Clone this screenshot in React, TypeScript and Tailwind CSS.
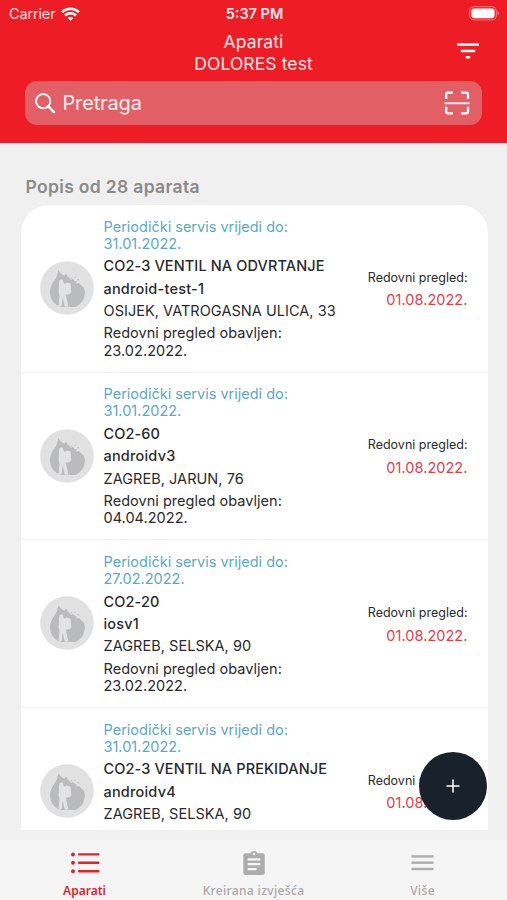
import { useState } from 'react';

interface Device {
  serviceUntil: string;
  model: string;
  name: string;
  address: string;
  checkedAt?: string;
  nextCheck: string;
}

const devices: Device[] = [
  {
    serviceUntil: '31.01.2022.',
    model: 'CO2-3 VENTIL NA ODVRTANJE',
    name: 'android-test-1',
    address: 'OSIJEK, VATROGASNA ULICA, 33',
    checkedAt: '23.02.2022.',
    nextCheck: '01.08.2022.',
  },
  {
    serviceUntil: '31.01.2022.',
    model: 'CO2-60',
    name: 'androidv3',
    address: 'ZAGREB, JARUN, 76',
    checkedAt: '04.04.2022.',
    nextCheck: '01.08.2022.',
  },
  {
    serviceUntil: '27.02.2022.',
    model: 'CO2-20',
    name: 'iosv1',
    address: 'ZAGREB, SELSKA, 90',
    checkedAt: '23.02.2022.',
    nextCheck: '01.08.2022.',
  },
  {
    serviceUntil: '31.01.2022.',
    model: 'CO2-3 VENTIL NA PREKIDANJE',
    name: 'androidv4',
    address: 'ZAGREB, SELSKA, 90',
    nextCheck: '01.08.2022.',
  },
];

function WifiIcon() {
  return (
    <svg width="19" height="14" viewBox="0 0 19 14" fill="none" stroke="#fff" strokeWidth="2.5">
      <path d="M1 5.2C5.8.7 13.2.7 18 5.2" />
      <path d="M4 8.5c3.2-2.9 7.8-2.9 11 0" />
      <path d="M9.5 13.8 6.5 11c1.700-1.500 4.300-1.500 6 0z" fill="#fff" stroke="none" />
    </svg>
  );
}

function BatteryIcon() {
  return (
    <svg width="31" height="15" viewBox="0 0 31 15">
      <rect x="0.7" y="0.7" width="26.6" height="13.2" rx="4" fill="none" stroke="#fff" strokeOpacity="0.4" />
      <rect x="2.4" y="2.4" width="23.2" height="9.8" rx="2.4" fill="#fff" />
      <path d="M28.6 5v4.6c1.6-.7 1.6-3.9 0-4.6z" fill="#fff" fillOpacity="0.5" />
    </svg>
  );
}

function FilterIcon() {
  return (
    <svg width="22" height="16" viewBox="0 0 22 16" fill="#fff">
      <rect x="0" y="0.3" width="22" height="2.5" rx="0.5" />
      <rect x="3.8" y="6.7" width="14.6" height="2.5" rx="1" />
      <rect x="8.7" y="13" width="4.6" height="2.5" rx="1" />
    </svg>
  );
}

function SearchIcon() {
  return (
    <svg width="22" height="22" viewBox="0 0 22 22" fill="none" stroke="#fff">
      <circle cx="8.2" cy="9.2" r="7.1" strokeWidth="1.9" />
      <path d="m13.5 14.7 5.500 5.500" strokeWidth="2.500" strokeLinecap="round" />
    </svg>
  );
}

function ScanIcon() {
  return (
    <svg width="26" height="24" viewBox="0 0 26 24" fill="none" stroke="#fff" strokeWidth="2.3">
      <path d="M2.2 8V3.2q0-1.500 1.500-1.500H9M17 1.700h5.500q1.500 0 1.500 1.500V8M24 15.800v5q0 1.500-1.500 1.500H17M9 22.300H3.700q-1.500 0-1.500-1.500v-5" />
      <path d="M0.5 12.300h25" strokeWidth="1.900" />
    </svg>
  );
}

function DeviceAvatar() {
  return (
    <svg width="54" height="54" viewBox="0 0 54 54" className="shrink-0">
      <circle cx="27" cy="27" r="26.8" fill="#e1e1e1" />
      <path
        d="M18.3 9C19.500 12 22 13.700 24.500 14.800L26 12.500 28 15.500 31 19 33 18 35 20.500 37 19.700 36 22.500 39 22 41.500 24.500 44 26.800C46.200 33 44 39.500 39.500 43.500L35.500 46H21C15 44.200 10.500 39 10 32.500 9.600 25.500 13.200 21.500 15.700 17.500 17.400 14.600 17.900 12 18.300 9Z"
        fill="#b9bbbc"
      />
      <path d="M31 16.500h1.200v1.200H31zM34.500 15.800h1v1h-1zM37.500 18h1.200v1.200h-1.200z" fill="#b9bbbc" />
      {/* Firefighter with a backpack */}
      <path
        d="M19.300 19.800C19.800 18 22.800 18 23.300 19.800L23.500 22 25 23 26 21.500 30.500 22.300 31.300 30.500 30.300 33 25.800 33.800 28.300 45.500H24.700L22.700 36.500 21.500 45.500H18.500L19.500 34.500 18.500 31 19 22.500Z"
        fill="#e3e3e3"
      />
    </svg>
  );
}

function ListIcon() {
  return (
    <svg width="30" height="22" viewBox="0 0 30 22" fill="#e3202b">
      <circle cx="3" cy="2.400" r="2" />
      <circle cx="3" cy="10.800" r="2" />
      <circle cx="3" cy="19.200" r="2" />
      <rect x="8" y="1.200" width="21.500" height="2.400" rx="1" />
      <rect x="8" y="9.600" width="21.500" height="2.400" rx="1" />
      <rect x="8" y="18" width="21.500" height="2.400" rx="1" />
    </svg>
  );
}

function ClipboardIcon() {
  return (
    <svg width="24" height="26" viewBox="0 0 24 26">
      <path
        d="M3.300 3.300h5.200a3.700 3.300 0 0 1 7 0h5.200q2 0 2 2v17.800q0 2-2 2H3.300q-2 0-2-2v-17.800q0-2 2-2z"
        fill="#adadad"
      />
      <circle cx="12" cy="4" r="1.200" fill="#f5f5f5" />
      <path d="M5.700 9.400h12.600M5.700 14.200h12.600M5.700 19.100h8.800" stroke="#f5f5f5" strokeWidth="2.300" />
    </svg>
  );
}

function MenuIcon() {
  return (
    <svg width="23" height="18" viewBox="0 0 23 18" fill="#adadad">
      <rect x="0.500" y="1.200" width="22" height="2.400" />
      <rect x="0.500" y="7.500" width="22" height="2.400" />
      <rect x="0.500" y="13.800" width="22" height="2.400" />
    </svg>
  );
}

function DeviceRow({ device }: { device: Device }) {
  return (
    <li className="flex h-[167.700px] shrink-0 items-start border-b border-[#efefef] pl-[19px] pr-5 pt-[12.5px] text-[14.5px] leading-[17.300px] text-[#292a2e]">
      <div className="mt-[43.500px]">
        <DeviceAvatar />
      </div>
      <div className="ml-[10px] flex w-[240px] shrink-0 flex-col gap-[5.100px] whitespace-nowrap">
        <div className="text-[#58a9cb]">
          Periodički servis vrijedi do:
          <br />
          {device.serviceUntil}
        </div>
        <div className="font-medium tracking-[0.12px]">{device.model}</div>
        <div className="font-medium tracking-[0.2px]">{device.name}</div>
        <div className="tracking-[0.04px]">{device.address}</div>
        {device.checkedAt && (
          <div className="tracking-[0.03px]">
            Redovni pregled obavljen:
            <br />
            {device.checkedAt}
          </div>
        )}
      </div>
      <div className="ml-auto mt-[51px] flex flex-col items-end gap-[5.500px] whitespace-nowrap">
        <div className="text-[12.5px]">Redovni pregled:</div>
        <div className="tracking-[0.05px] text-[#e63b47]">{device.nextCheck}</div>
      </div>
    </li>
  );
}

const tabs = [
  { label: 'Aparati', icon: ListIcon },
  { label: 'Kreirana izvješća', icon: ClipboardIcon },
  { label: 'Više', icon: MenuIcon },
];

export default function App() {
  const [query, setQuery] = useState('');

  return (
    <div className="relative flex h-[900px] w-[507px] flex-col overflow-hidden bg-[#f0f0f0] font-['Inter',sans-serif]">
      <header className="h-[142.500px] shrink-0 bg-[#ee1c25] text-white">
        {/* Status bar */}
        <div className="grid h-[27px] grid-cols-[1fr_auto_1fr] items-center pl-[9px] pr-[7px] text-[14.500px]">
          <div className="flex items-center gap-[6px] text-white/85">
            <span className="tracking-[-0.15px]">Carrier</span>
            <WifiIcon />
          </div>
          <div className="text-center font-semibold text-white/90">5:37 PM</div>
          <div className="flex justify-end">
            <BatteryIcon />
          </div>
        </div>

        <div className="grid h-[53.500px] grid-cols-[1fr_auto_1fr] items-start pr-[28px] pl-[28px] pt-[4px]">
          <h1 className="col-start-2 text-center text-[17.500px] leading-[21.500px] tracking-[0.1px] text-white/90">
            Aparati
            <br />
            DOLORES test
          </h1>
          <button className="mt-[12px] justify-self-end">
            <FilterIcon />
          </button>
        </div>

        <label className="mx-[25px] flex h-[44px] items-center rounded-[12px] bg-[#e25f65] pl-[10px] pr-[12px]">
          <SearchIcon />
          <input
            value={query}
            onChange={(e) => setQuery(e.target.value)}
            placeholder="Pretraga"
            className="ml-[5.500px] min-w-0 flex-1 bg-transparent text-[20px] tracking-[-0.15px] text-white outline-none placeholder:text-white/90"
          />
          <ScanIcon />
        </label>
      </header>

      <main className="flex min-h-0 flex-1 flex-col pl-[20.500px] pr-[19.500px] pt-[33px]">
        <h2 className="pl-[5px] text-[17.500px] font-semibold leading-[22px] tracking-[0.330px] text-[#8a8a8a]">
          Popis od 28 aparata
        </h2>
        <ul className="mt-[7.500px] flex h-[625px] shrink-0 flex-col overflow-hidden rounded-t-[28px] bg-white">
          {devices.map((d) => (
            <DeviceRow key={d.name} device={d} />
          ))}
        </ul>
      </main>

      <nav className="grid h-[60px] shrink-0 grid-cols-3 bg-[#f5f5f5] font-['Noto_Sans',sans-serif] text-[12px]">
        {tabs.map(({ label, icon: Icon }, i) => (
          <button
            key={label}
            className={`flex flex-col items-center ${
              i === 0 ? 'font-semibold text-[#e3202b]' : 'font-medium tracking-[0.35px] text-[#a8a8a8]'
            }`}
          >
            <span className="mt-[10px] flex h-[26px] items-center">
              <Icon />
            </span>
            <span className="mt-[6px] leading-[18px]">{label}</span>
          </button>
        ))}
      </nav>

      <button className="absolute left-[419px] top-[752px] flex h-[68px] w-[68px] items-center justify-center rounded-full bg-[#19212b]">
        <svg width="14" height="14" viewBox="0 0 14 14" stroke="#fff" strokeWidth="1.500">
          <path d="M7 .5v13M.5 7h13" />
        </svg>
      </button>
    </div>
  );
}
